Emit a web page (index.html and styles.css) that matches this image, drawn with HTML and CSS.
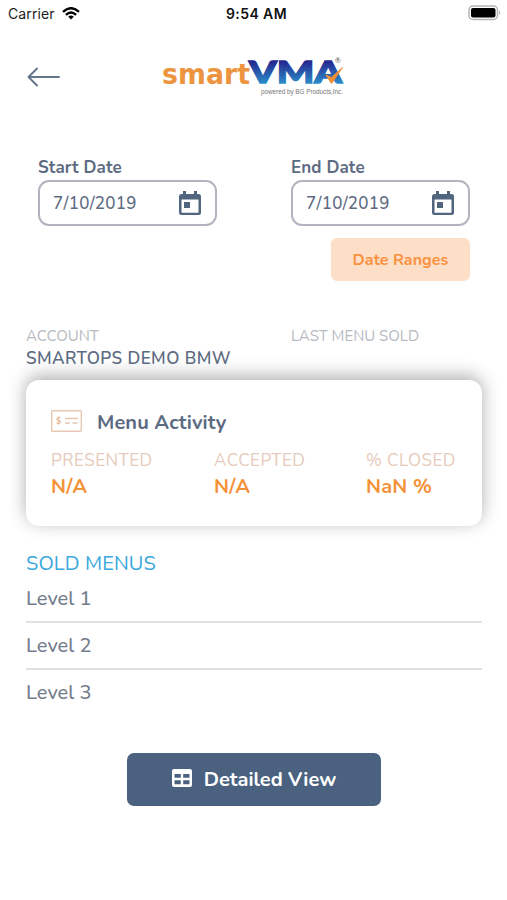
FILE: index.html
```html
<!DOCTYPE html>
<html lang="en">
<head>
<meta charset="utf-8">
<title>Menu Activity</title>
<link rel="stylesheet" href="styles.css">
</head>
<body>
<div class="status">
  <div class="carrier"><span>Carrier</span>
    <svg width="18" height="13" viewBox="0 0 18 13"><g fill="none" stroke="#000" stroke-width="2.4"><path d="M1 4.8Q9-2.4 17 4.8"/><path d="M3.9 7.8Q9 3.2 14.1 7.8"/></g><path d="M6.2 9.8Q9 7.4 11.8 9.8L9 12.6z"/></svg>
  </div>
  <div class="time">9:54 AM</div>
  <svg class="battery" width="33" height="16" viewBox="0 0 33 16"><rect x="1" y="1" width="28.5" height="13.5" rx="4" fill="#fff" stroke="#b5b5b5" stroke-width="1.5"/><rect x="3" y="3" width="24.5" height="9.5" rx="2" fill="#000"/><path d="M31.3 5.6Q33 7.8 31.3 10z" fill="#888"/></svg>
</div>
<header class="header">
  <svg class="back" width="34" height="20" viewBox="0 0 34 20" fill="none" stroke="#65758a" stroke-width="2" stroke-linecap="round" stroke-linejoin="round"><path d="M32 10H1.500M10 1.500L1.500 10L10 18.500"/></svg>
  <svg class="logo" width="190" height="56" viewBox="0 -14 190 56">
    <defs><linearGradient id="blue" gradientUnits="userSpaceOnUse" x1="0" y1="4" x2="0" y2="28"><stop offset=".1" stop-color="#252c91"/><stop offset="1" stop-color="#2a8fcb"/></linearGradient></defs>
    <text class="smart" x="1" y="27.500" textLength="88" lengthAdjust="spacingAndGlyphs">smart</text>
    <text class="vma" x="88" y="27" textLength="93" lengthAdjust="spacingAndGlyphs" fill="url(#blue)" stroke="url(#blue)">VMA</text>
    <path d="M165 19l5.500 8.500l11-16l-11 10z" fill="#f58d32" stroke="#f58d32" stroke-width="1"/>
    <text class="reg" x="174" y="7">®</text>
    <text class="powered" x="100" y="37.500" textLength="82" lengthAdjust="spacingAndGlyphs">powered by BG Products,Inc.</text>
  </svg>
</header>
<section class="dates">
  <div class="field">
    <label class="label">Start Date</label>
    <div class="input"><span class="value">7/10/2019</span>
      <svg width="22" height="25" viewBox="0 0 22 25"><path fill="#52657e" fill-rule="evenodd" d="M4 0h3v3h8V0h3v3h1.500q2.500 0 2.500 2.500v16q0 2.500-2.500 2.500h-17Q0 24 0 21.500v-16Q0 3 2.500 3H4zM2.500 8.500V21.700h17V8.500zM5 11h6v6H5z"/></svg>
    </div>
  </div>
  <div class="field">
    <label class="label">End Date</label>
    <div class="input"><span class="value">7/10/2019</span>
      <svg width="22" height="25" viewBox="0 0 22 25"><path fill="#52657e" fill-rule="evenodd" d="M4 0h3v3h8V0h3v3h1.500q2.500 0 2.500 2.500v16q0 2.500-2.500 2.500h-17Q0 24 0 21.500v-16Q0 3 2.500 3H4zM2.500 8.500V21.700h17V8.500zM5 11h6v6H5z"/></svg>
    </div>
  </div>
</section>
<div class="ranges-row"><button class="ranges">Date Ranges</button></div>
<section class="account">
  <div><div class="caption">ACCOUNT</div><div class="name">SMARTOPS DEMO BMW</div></div>
  <div><div class="caption">LAST MENU SOLD</div></div>
</section>
<section class="card">
  <div class="card-head">
    <svg width="31" height="22" viewBox="0 0 31 22" fill="none" stroke="#e8c8b3" stroke-width="1.400"><rect x=".7" y=".7" width="29.600" height="20.600" rx="1"/><path d="M14 8.500h13M14 13h5M21.500 13h5"/><text x="5" y="14" class="dollar">$</text></svg>
    <h2>Menu Activity</h2>
  </div>
  <div class="stats">
    <div><div class="stat-label">PRESENTED</div><div class="stat">N/A</div></div>
    <div><div class="stat-label">ACCEPTED</div><div class="stat">N/A</div></div>
    <div><div class="stat-label">% CLOSED</div><div class="stat">NaN %</div></div>
  </div>
</section>
<section class="sold">
  <h3>SOLD MENUS</h3>
  <ul><li>Level 1</li><li>Level 2</li><li>Level 3</li></ul>
</section>
<button class="detail">
  <svg width="20" height="18" viewBox="0 0 20 18"><path fill="#fff" fill-rule="evenodd" d="M2 0h16q2 0 2 2v14q0 2-2 2H2q-2 0-2-2V2Q0 0 2 0zM2.500 5v3.700h6.300V5zM11.200 5v3.700h6.300V5zM2.500 11.200v4h6.300v-4zM11.200 11.200v4h6.300v-4z"/></svg>
  <span>Detailed View</span>
</button>
</body>
</html>
```
FILE: styles.css
```css
* { box-sizing: border-box; }
body { margin: 0; width: 507px; height: 900px; overflow: hidden; background: #fff; color: #5d6b82; font-family: Nunito, Lato, sans-serif; }
svg { display: block; flex: none; }
button { border: 0; padding: 0; font-family: inherit; }
h2, h3, ul { margin: 0; padding: 0; }
div, span, label { white-space: nowrap; }

.status { height: 28px; display: grid; grid-template-columns: 1fr auto 1fr; align-items: center; padding: 0 6px 0 8px; font-family: Inter, sans-serif; color: #111; }
.carrier { display: flex; align-items: center; gap: 7px; font-size: 14px; letter-spacing: .12px; color: #222; }
.carrier, .time { margin-top: -1px; }
.time { font-size: 14px; font-weight: 600; letter-spacing: .4px; padding-left: 4px; }
.battery { justify-self: end; margin-top: -2px; }

.header { height: 130px; display: flex; align-items: flex-start; padding: 14px 0 0 27px; }
.back { margin-top: 25px; }
.logo { margin-left: 100px; }
.smart { font: bold 28.5px "DejaVu Sans", sans-serif; fill: #ec943f; }
.vma { font: 900 31px Lato, sans-serif; stroke-width: 1.4px; }
.reg { font: 7px Lato, sans-serif; fill: #555; }
.powered { font: 7px "Liberation Sans", sans-serif; fill: #777; }

.dates { display: flex; gap: 74px; padding-left: 38px; }
.field { width: 179px; }
.label { display: block; height: 22px; line-height: 20px; font-size: 17px; font-weight: 700; letter-spacing: .12px; }
.input { height: 46px; border: 2px solid #b2b5bf; border-radius: 11px; display: flex; align-items: center; justify-content: space-between; padding: 0 14px 0 13px; }
.value { font-size: 17px; letter-spacing: .28px; line-height: 24px; padding-top: 1px; font-weight: 500; }
.ranges-row { display: flex; justify-content: flex-end; padding: 12px 37px 0 0; }
.ranges { width: 139px; height: 43px; border-radius: 6px; background: #fddfc7; color: #fa9140; font-size: 16px; font-weight: 700; letter-spacing: .06px; }

.account { display: flex; margin-top: 44px; height: 55px; padding-left: 26px; }
.account > div { flex: none; width: 265px; }
.account > div:last-child { width: 190px; }
.caption { height: 22px; line-height: 22px; font-size: 15px; color: #b5bac1; }
.name { line-height: 23px; font-size: 17px; font-weight: 600; letter-spacing: .42px; }
.card { width: 456px; height: 146px; margin: 0 0 0 26px; padding: 28px 25px 0; border-radius: 13px; background: #fff; box-shadow: 0 -4px 18px rgba(0,0,0,.32); }
.card-head { display: flex; align-items: center; gap: 15px; height: 28px; }
.card-head svg { margin-top: -3px; }
.card-head h2 { font-size: 20px; font-weight: 700; letter-spacing: .08px; white-space: nowrap; }
.dollar { font: bold 9px Lato, sans-serif; fill: #e8b899; stroke: none; }
.stats { display: grid; grid-template-columns: 163px 152px auto; margin-top: 13px; }
.stat-label { line-height: 24px; font-size: 17px; letter-spacing: .45px; color: #e6cabb; }
.stat { line-height: 28px; font-size: 20px; font-weight: 700; letter-spacing: .2px; color: #f49239; }

.sold { margin: 25px 25px 0 26px; }
.sold h3 { height: 25px; line-height: 25px; font-size: 20px; font-weight: 400; letter-spacing: .1px; color: #38a8dc; }
.sold ul { list-style: none; }
.sold li { height: 47px; padding-top: 11px; line-height: 23px; font-size: 20px; font-weight: 500; color: #747d8c; }
.sold li:first-child { height: 45px; }
.sold li + li { border-top: 2px solid #e0e1e3; padding-top: 11px; }
.detail { display: flex; align-items: center; justify-content: center; gap: 12px; width: 254px; height: 53px; margin: 38px 0 0 127px; border-radius: 7px; background: #4a627f; color: #fff; font-size: 20px; font-weight: 700; }
.detail svg { margin-top: -4px; }
```
